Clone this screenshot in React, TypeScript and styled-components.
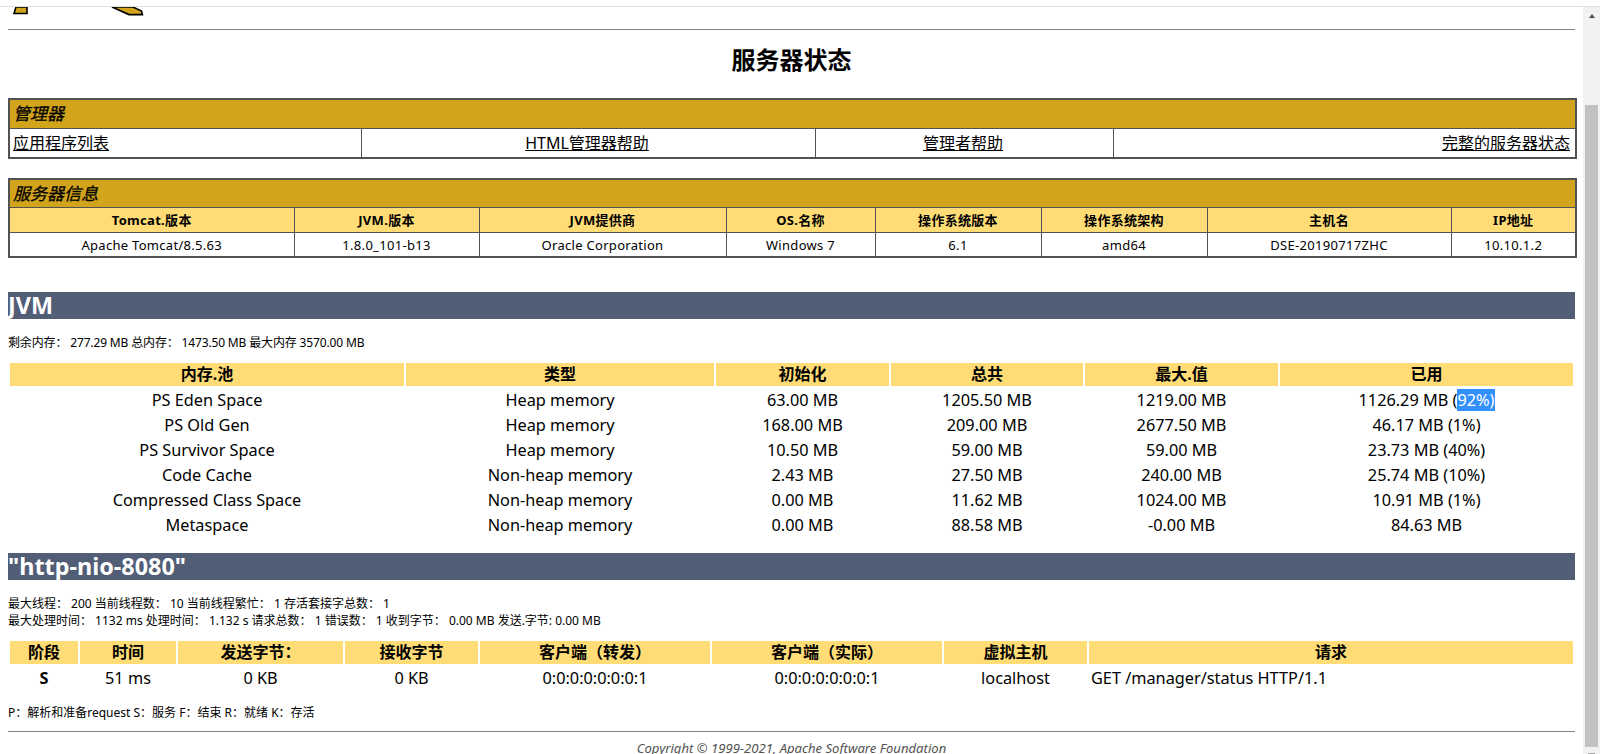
import React from "react";
import styled, { createGlobalStyle } from "styled-components";

const Global = createGlobalStyle`
  html, body { margin: 0; padding: 0; background: #fff; height: 754px; overflow: hidden; }
  body { font-family: "Noto Sans", "Noto Sans CJK SC", sans-serif; color: #000; }
  #root { height: 754px; overflow: hidden; }
`;

const FONT = `"Noto Sans", "Noto Sans CJK SC", sans-serif`;
const GOLD = "#d2a41c";
const SAND = "#ffdc75";
const SLATE = "#525d76";
const LINE = "#525252";

const Shell = styled.div`
  display: flex;
  flex-direction: column;
  height: 754px;
  overflow: hidden;
`;
const BrowserEdge = styled.div`
  flex: none;
  height: 6px;
  border-bottom: 1px solid #e0e0e0;
`;
const Viewport = styled.div`
  flex: 1;
  min-height: 0;
  display: flex;
`;
const Content = styled.main`
  flex: 1;
  min-width: 0;
  padding: 0 8px;
  overflow: hidden;
`;
const Scrollbar = styled.aside`
  flex: none;
  width: 13px;
  padding: 0 2px;
  background: #f1f1f1;
  display: flex;
  flex-direction: column;
  align-items: center;
`;
const ArrowSlot = styled.div`
  flex: none;
  height: 98px;
  padding-top: 7px;
  box-sizing: border-box;
  display: flex;
  justify-content: center;
  align-self: stretch;
`;
const ArrowUp = styled.div`
  width: 0;
  height: 0;
  border-left: 3.5px solid transparent;
  border-right: 3.5px solid transparent;
  border-bottom: 4px solid #505050;
`;
const Thumb = styled.div`
  flex: none;
  height: 642px;
  align-self: stretch;
  background: #c1c1c1;
`;
const ArrowDownEdge = styled.div`
  flex: none;
  margin-top: 6px;
  width: 7px;
  height: 1px;
  background: #a3a3a3;
`;

const LogoStrip = styled.header`
  height: 22px;
  padding-left: 5px;
`;
const LogoCrop = styled.svg`
  display: block;
  width: 135px;
  height: 9px;
`;
const Rule = styled.hr`
  margin: 0;
  border: 0;
  height: 1px;
  background: #808080;
`;
const PageTitle = styled.h1`
  margin: 0;
  padding-top: 14px;
  height: 68px;
  box-sizing: border-box;
  text-align: center;
  font: bold 24px/32px ${FONT};
`;

const BoxTable = styled.table<{ $after: number }>`
  width: 100%;
  table-layout: fixed;
  border-collapse: collapse;
  border: 2px solid ${LINE};
  margin-bottom: ${(p) => p.$after}px;
`;
const Col = styled.col<{ $w: number }>`
  width: ${(p) => p.$w}px;
`;
const TitleCell = styled.td<{ $h: number }>`
  height: ${(p) => p.$h}px;
  padding: 0 3px;
  background: ${GOLD};
  border: 1px solid ${LINE};
  font: italic 17px/20px ${FONT};
  -webkit-text-stroke: 0.3px #000;
`;
const LinkCell = styled.td<{ $align: string }>`
  height: 28px;
  padding: 0 5px 0 3px;
  border: 1px solid ${LINE};
  text-align: ${(p) => p.$align};
  font: 16px/20px ${FONT};
`;
const PlainLink = styled.a`
  color: #000;
  text-decoration: underline;
`;
const InfoHead = styled.th`
  height: 24px;
  padding: 0;
  background: ${SAND};
  border: 1px solid ${LINE};
  text-align: center;
  letter-spacing: 0.3px;
  font: bold 13px/16px ${FONT};
`;
const InfoCell = styled.td`
  height: 23px;
  padding: 0;
  border: 1px solid ${LINE};
  text-align: center;
  letter-spacing: 0.3px;
  font: 13px/16px ${FONT};
`;

const SectionBar = styled.h2`
  margin: 0;
  height: 27px;
  background: ${SLATE};
  color: #fff;
  font: bold 23.4px/27px ${FONT};
`;
const Note = styled.p<{ $top: number; $bottom: number; $tight?: boolean }>`
  margin: ${(p) => p.$top}px 0 ${(p) => p.$bottom}px;
  letter-spacing: ${(p) => (p.$tight ? "-0.15px" : "0")};
  font: 12px/17px ${FONT};
`;
const DataTable = styled.table<{ $after: number }>`
  width: 100%;
  table-layout: fixed;
  border-collapse: separate;
  border-spacing: 2px;
  margin-bottom: ${(p) => p.$after}px;
`;
const DataHead = styled.th`
  height: 23px;
  padding: 0;
  background: ${SAND};
  text-align: center;
  font: bold 16px/23px ${FONT};
`;
const DataCell = styled.td<{ $strong?: boolean; $left?: boolean }>`
  box-sizing: border-box;
  height: 23px;
  padding: ${(p) => (p.$left ? "1px 0 0 2px" : "1px 0 0")};
  text-align: ${(p) => (p.$left ? "left" : "center")};
  font: ${(p) => (p.$strong ? "bold" : "normal")} 16.3px/22px ${FONT};
  white-space: nowrap;
`;
const Selected = styled.span`
  background: #3390ff;
  color: #fff;
`;
const Copyright = styled.p`
  margin: 7px 0 0;
  text-align: center;
  color: #525252;
  font: italic 13.1px/18px ${FONT};
`;

const managerLinks = [
  { label: "应用程序列表", align: "left" },
  { label: "HTML管理器帮助", align: "center" },
  { label: "管理者帮助", align: "center" },
  { label: "完整的服务器状态", align: "right" },
];
const infoHeads = ["Tomcat.版本", "JVM.版本", "JVM提供商", "OS.名称", "操作系统版本", "操作系统架构", "主机名", "IP地址"];
const infoVals = ["Apache Tomcat/8.5.63", "1.8.0_101-b13", "Oracle Corporation", "Windows 7", "6.1", "amd64", "DSE-20190717ZHC", "10.10.1.2"];
const memHeads = ["内存.池", "类型", "初始化", "总共", "最大.值", "已用"];
const memRows: React.ReactNode[][] = [
  ["PS Eden Space", "Heap memory", "63.00 MB", "1205.50 MB", "1219.00 MB", <>1126.29 MB (<Selected>92%)</Selected></>],
  ["PS Old Gen", "Heap memory", "168.00 MB", "209.00 MB", "2677.50 MB", "46.17 MB (1%)"],
  ["PS Survivor Space", "Heap memory", "10.50 MB", "59.00 MB", "59.00 MB", "23.73 MB (40%)"],
  ["Code Cache", "Non-heap memory", "2.43 MB", "27.50 MB", "240.00 MB", "25.74 MB (10%)"],
  ["Compressed Class Space", "Non-heap memory", "0.00 MB", "11.62 MB", "1024.00 MB", "10.91 MB (1%)"],
  ["Metaspace", "Non-heap memory", "0.00 MB", "88.58 MB", "-0.00 MB", "84.63 MB"],
];
const reqHeads = ["阶段", "时间", "发送字节：", "接收字节", "客户端（转发）", "客户端（实际）", "虚拟主机", "请求"];

export default function App() {
  return (
    <Shell>
      <Global />
      <BrowserEdge />
      <Viewport>
        <Content>
          <LogoStrip>
            <LogoCrop viewBox="0 0 135 9" aria-hidden="true">
              <path d="M3 0 L1 6.5 H14 V0 Z" fill={GOLD} stroke="#000" strokeWidth="1.6" />
              <path d="M99 0 L116 7.6 H129.4 L128.5 4 L120 0 Z" fill={GOLD} stroke="#000" strokeWidth="1.6" />
            </LogoCrop>
          </LogoStrip>
          <Rule />
          <PageTitle>服务器状态</PageTitle>

          <BoxTable $after={19}>
            <colgroup>
              <Col $w={352} /><Col $w={454} /><Col $w={298} /><Col $w={463} />
            </colgroup>
            <tbody>
              <tr><TitleCell $h={28} colSpan={4}>管理器</TitleCell></tr>
              <tr>
                {managerLinks.map((l) => (
                  <LinkCell key={l.label} $align={l.align}><PlainLink href="#">{l.label}</PlainLink></LinkCell>
                ))}
              </tr>
            </tbody>
          </BoxTable>

          <BoxTable $after={34}>
            <colgroup>
              <Col $w={285} /><Col $w={185} /><Col $w={247} /><Col $w={149} /><Col $w={166} /><Col $w={166} /><Col $w={244} /><Col $w={125} />
            </colgroup>
            <tbody>
              <tr><TitleCell $h={27} colSpan={8}>服务器信息</TitleCell></tr>
              <tr>{infoHeads.map((h) => <InfoHead key={h}>{h}</InfoHead>)}</tr>
              <tr>{infoVals.map((v) => <InfoCell key={v}>{v}</InfoCell>)}</tr>
            </tbody>
          </BoxTable>

          <SectionBar>JVM</SectionBar>
          <Note $top={15} $bottom={10} $tight>剩余内存： 277.29 MB 总内存： 1473.50 MB 最大内存 3570.00 MB</Note>
          <DataTable $after={15}>
            <colgroup>
              <Col $w={394} /><Col $w={308} /><Col $w={173} /><Col $w={192} /><Col $w={193} /><Col $w={293} />
            </colgroup>
            <thead>
              <tr>{memHeads.map((h) => <DataHead key={h}>{h}</DataHead>)}</tr>
            </thead>
            <tbody>
              {memRows.map((row, i) => (
                <tr key={i}>{row.map((c, j) => <DataCell key={j}>{c}</DataCell>)}</tr>
              ))}
            </tbody>
          </DataTable>

          <SectionBar>"http-nio-8080"</SectionBar>
          <Note $top={15} $bottom={10}>
            最大线程： 200 当前线程数： 10 当前线程繁忙： 1 存活套接字总数： 1<br />
            最大处理时间： 1132 ms 处理时间： 1.132 s 请求总数： 1 错误数： 1 收到字节： 0.00 MB 发送.字节: 0.00 MB
          </Note>
          <DataTable $after={13}>
            <colgroup>
              <Col $w={68} /><Col $w={96} /><Col $w={165} /><Col $w={133} /><Col $w={230} /><Col $w={230} /><Col $w={143} /><Col $w={484} />
            </colgroup>
            <thead>
              <tr>{reqHeads.map((h) => <DataHead key={h}>{h}</DataHead>)}</tr>
            </thead>
            <tbody>
              <tr>
                <DataCell $strong>S</DataCell>
                <DataCell>51 ms</DataCell>
                <DataCell>0 KB</DataCell>
                <DataCell>0 KB</DataCell>
                <DataCell>0:0:0:0:0:0:0:1</DataCell>
                <DataCell>0:0:0:0:0:0:0:1</DataCell>
                <DataCell>localhost</DataCell>
                <DataCell $left>GET /manager/status HTTP/1.1</DataCell>
              </tr>
            </tbody>
          </DataTable>
          <Note $top={0} $bottom={10}>P：解析和准备request S：服务 F：结束 R：就绪 K：存活</Note>
          <Rule />
          <Copyright>Copyright © 1999-2021, Apache Software Foundation</Copyright>
        </Content>
        <Scrollbar>
          <ArrowSlot><ArrowUp /></ArrowSlot>
          <Thumb />
          <ArrowDownEdge />
        </Scrollbar>
      </Viewport>
    </Shell>
  );
}
